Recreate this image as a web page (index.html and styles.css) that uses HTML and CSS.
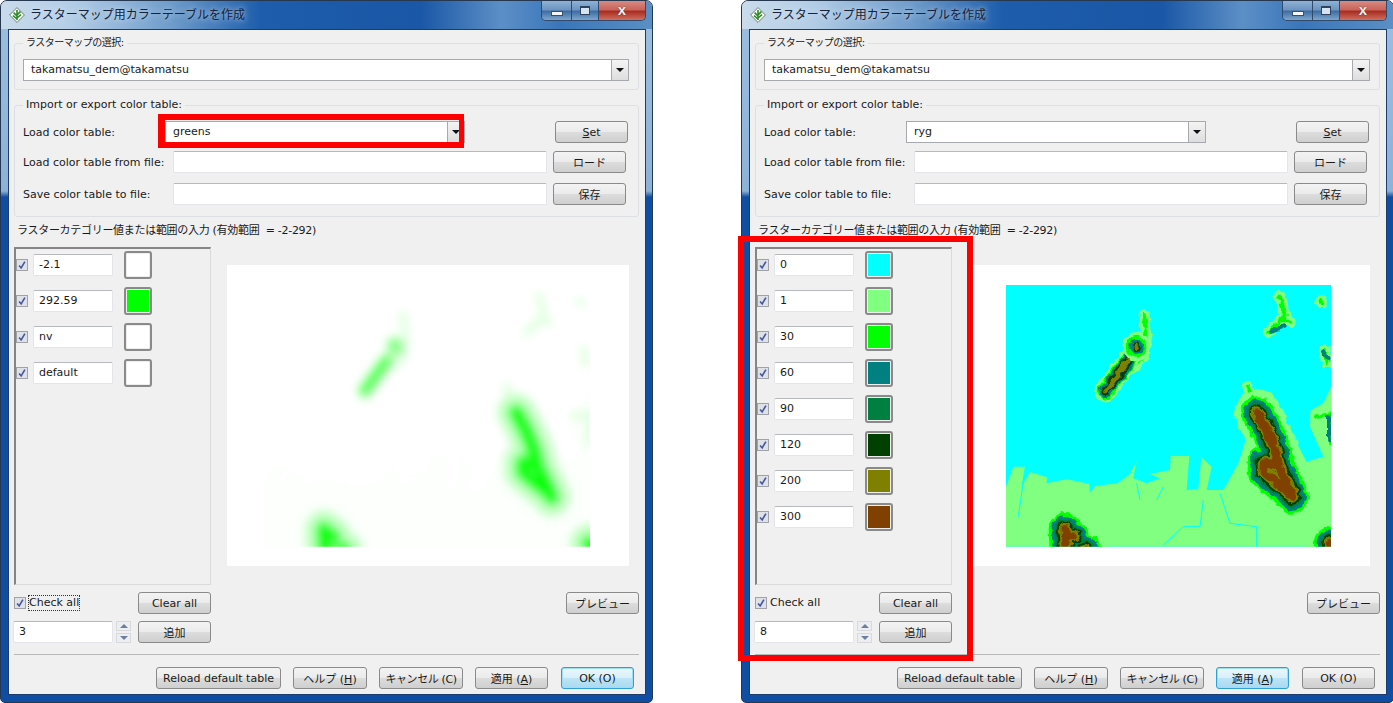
FILE: index.html
```html
<!DOCTYPE html>
<html lang="ja">

<head>
  <meta charset="UTF-8" />
  <title>ラスターマップ用カラーテーブルを作成</title>
  <link rel="stylesheet" href="styles.css">
</head>

<body>
  <!-- shared svg parts -->
  <svg class="defs" aria-hidden="true">
    <defs>
      <symbol id="tick" viewBox="0 0 12 12">
        <path d="M2.5 6.5 L5 9.5 L9.5 2" fill="none" stroke="#46599c" stroke-width="2" />
      </symbol>
      <symbol id="app" viewBox="0 0 16 16">
        <path d="M8 .6 L15.4 8 L8 15.4 L.6 8 Z" fill="#f6f9f2" stroke="#4d6a5a" stroke-width=".8" />
        <path d="M8 3 L8 13 M8 9 L4.6 5.6 M8 8 L11.4 4.6 M8 12 L4 8.6 M8 11 L12 7.6" stroke="#2f8a2c" stroke-width="1.6" fill="none" />
      </symbol>
      <filter id="rough" filterUnits="userSpaceOnUse" x="-66" y="-15" width="1206" height="903">
        <feTurbulence type="fractalNoise" baseFrequency="0.045" numOctaves="2" seed="4" />
        <feDisplacementMap in="SourceGraphic" scale="20" xChannelSelector="R" yChannelSelector="G" />
      </filter>
      <filter id="soft" filterUnits="userSpaceOnUse" x="-66" y="-15" width="1206" height="903">
        <feGaussianBlur stdDeviation="13" />
      </filter>
      <clipPath id="map-edge">
        <rect x="48" y="45" width="975" height="785" />
      </clipPath>
      <path id="land" d="M48 830 L48 650 L70 590 L105 590 L95 650 L120 606 L172 622 L170 640 L205 632 L232 628 L298 642 L300 668 L315 648 L382 640 L420 612 L440 572 L430 625 L470 640 L510 625 L480 612 L540 600 L542 558 L598 558 L590 660 L625 656 L634 562 L665 590 L650 660 L700 660 L745 580 L770 500 L900 480 L950 575 L1000 560 L960 470 L962 420 L1000 400 L1023 350 L1023 830 Z" />
      <path id="rivers" d="M105 600 L85 740 M690 670 L720 760 L800 770 L800 830 M640 690 L630 770 L580 770 L520 825 M440 640 L450 690 M520 650 L500 690" />
      <g id="big">
        <path d="M802 428 L830 480 L855 540 L866 590 L895 650 L908 682 M862 585 L822 578 L822 605 L850 630 L895 665" />
        <path d="M225 778 L228 840 M225 795 L250 798 M285 840 L285 845" />
        <path d="M1035 835 L1020 820" />
      </g>
      <g id="small">
        <path d="M348 362 L380 318 L414 272" />
      </g>
      <g id="peak">
        <path d="M438 226 L441 234" />
      </g>
      <g id="islands">
        <path d="M462 135 L470 200 L462 260 L425 295 M870 78 L885 140 L835 185 M880 150 L900 155 M992 95 L996 97 M1005 240 L1010 280 M975 440 L1020 430 L1020 520 M775 350 L778 385" />
      </g>
      <g id="spots">
        <path d="M845 182 L880 170 M1000 245 L1015 265 M1018 440 L1018 510" />
      </g>
    </defs>
  </svg>

  <!-- left window -->
  <div class="window win-left">
    <div class="titlebar">
      <svg class="app-icon"><use href="#app" /></svg>
      <span class="title">ラスターマップ用カラーテーブルを作成</span>
      <div class="caption">
        <span class="cap cap-min"><i></i></span>
        <span class="cap cap-max"><i></i></span>
        <span class="cap cap-close">x</span>
      </div>
    </div>
    <div class="client">
      <fieldset class="group group-map">
        <legend class="legend-jp">ラスターマップの選択:</legend>
        <div class="combo combo-wide"><span>takamatsu_dem@takamatsu</span><b></b></div>
      </fieldset>
      <fieldset class="group group-table">
        <legend>Import or export color table:</legend>
        <div class="form-row">
          <label class="lab lab-short">Load color table:</label>
          <div class="combo combo-table"><span>greens</span><b></b></div>
          <button class="btn btn-set"><u>S</u>et</button>
        </div>
        <div class="form-row">
          <label class="lab">Load color table from file:</label>
          <div class="input input-file"></div>
          <button class="btn">ロード</button>
        </div>
        <div class="form-row">
          <label class="lab">Save color table to file:</label>
          <div class="input input-file"></div>
          <button class="btn">保存</button>
        </div>
      </fieldset>
      <div class="range">ラスターカテゴリー値または範囲の入力 (有効範囲&nbsp; = -2-292)</div>
      <div class="main">
        <div class="side">
          <div class="rules">
            <div class="rule"><span class="check"><svg><use href="#tick" /></svg></span><div class="input input-val">-2.1</div><span class="swatch"><i class="c-white"></i></span></div>
            <div class="rule"><span class="check"><svg><use href="#tick" /></svg></span><div class="input input-val">292.59</div><span class="swatch"><i class="c-lime"></i></span></div>
            <div class="rule"><span class="check"><svg><use href="#tick" /></svg></span><div class="input input-val">nv</div><span class="swatch"><i class="c-white"></i></span></div>
            <div class="rule"><span class="check"><svg><use href="#tick" /></svg></span><div class="input input-val">default</div><span class="swatch"><i class="c-white"></i></span></div>
          </div>
          <div class="side-row">
            <span class="check"><svg><use href="#tick" /></svg></span>
            <span class="check-label focused">Check all</span>
            <button class="btn btn-side">Clear all</button>
          </div>
          <div class="side-row side-row-spin">
            <div class="input input-spin">3</div>
            <div class="spin"><b class="up"></b><b class="down"></b></div>
            <button class="btn btn-side">追加</button>
          </div>
        </div>
        <div class="preview-col">
          <div class="preview">
            <svg class="map" viewBox="-66 -15 1206 903">
              <g clip-path="url(#map-edge)">
                <use href="#land" fill="#fcfffc" />
                <g filter="url(#soft)" fill="none" stroke-linecap="round" stroke-linejoin="round">
                  <use href="#islands" stroke="#e4ffe4" stroke-width="26" />
                  <use href="#big" stroke="#c8ffc8" stroke-width="116" />
                  <use href="#big" stroke="#50ff50" stroke-width="56" />
                  <use href="#big" stroke="#00ff00" stroke-width="28" />
                  <use href="#small" stroke="#b0ffb0" stroke-width="50" />
                  <use href="#small" stroke="#30ff30" stroke-width="22" />
                  <use href="#peak" stroke="#b0ffb0" stroke-width="56" />
                  <use href="#peak" stroke="#30ff30" stroke-width="18" />
                </g>
              </g>
            </svg>
          </div>
          <button class="btn btn-preview">プレビュー</button>
        </div>
      </div>
      <div class="sep"></div>
      <div class="footer">
        <button class="btn btn-reload">Reload default table</button>
        <button class="btn btn-help">ヘルプ (<u>H</u>)</button>
        <button class="btn btn-cancel">キャンセル (C)</button>
        <button class="btn btn-apply">適用 (<u>A</u>)</button>
        <button class="btn btn-ok btn-default">OK (O)</button>
      </div>
    </div>
  </div>

  <!-- right window -->
  <div class="window win-right">
    <div class="titlebar">
      <svg class="app-icon"><use href="#app" /></svg>
      <span class="title">ラスターマップ用カラーテーブルを作成</span>
      <div class="caption">
        <span class="cap cap-min"><i></i></span>
        <span class="cap cap-max"><i></i></span>
        <span class="cap cap-close">x</span>
      </div>
    </div>
    <div class="client">
      <fieldset class="group group-map">
        <legend class="legend-jp">ラスターマップの選択:</legend>
        <div class="combo combo-wide"><span>takamatsu_dem@takamatsu</span><b></b></div>
      </fieldset>
      <fieldset class="group group-table">
        <legend>Import or export color table:</legend>
        <div class="form-row">
          <label class="lab lab-short">Load color table:</label>
          <div class="combo combo-table"><span>ryg</span><b></b></div>
          <button class="btn btn-set"><u>S</u>et</button>
        </div>
        <div class="form-row">
          <label class="lab">Load color table from file:</label>
          <div class="input input-file"></div>
          <button class="btn">ロード</button>
        </div>
        <div class="form-row">
          <label class="lab">Save color table to file:</label>
          <div class="input input-file"></div>
          <button class="btn">保存</button>
        </div>
      </fieldset>
      <div class="range">ラスターカテゴリー値または範囲の入力 (有効範囲&nbsp; = -2-292)</div>
      <div class="main">
        <div class="side">
          <div class="rules">
            <div class="rule"><span class="check"><svg><use href="#tick" /></svg></span><div class="input input-val">0</div><span class="swatch"><i class="c-cyan"></i></span></div>
            <div class="rule"><span class="check"><svg><use href="#tick" /></svg></span><div class="input input-val">1</div><span class="swatch"><i class="c-light"></i></span></div>
            <div class="rule"><span class="check"><svg><use href="#tick" /></svg></span><div class="input input-val">30</div><span class="swatch"><i class="c-lime"></i></span></div>
            <div class="rule"><span class="check"><svg><use href="#tick" /></svg></span><div class="input input-val">60</div><span class="swatch"><i class="c-teal"></i></span></div>
            <div class="rule"><span class="check"><svg><use href="#tick" /></svg></span><div class="input input-val">90</div><span class="swatch"><i class="c-green"></i></span></div>
            <div class="rule"><span class="check"><svg><use href="#tick" /></svg></span><div class="input input-val">120</div><span class="swatch"><i class="c-dark"></i></span></div>
            <div class="rule"><span class="check"><svg><use href="#tick" /></svg></span><div class="input input-val">200</div><span class="swatch"><i class="c-olive"></i></span></div>
            <div class="rule"><span class="check"><svg><use href="#tick" /></svg></span><div class="input input-val">300</div><span class="swatch"><i class="c-brown"></i></span></div>
          </div>
          <div class="side-row">
            <span class="check"><svg><use href="#tick" /></svg></span>
            <span class="check-label">Check all</span>
            <button class="btn btn-side">Clear all</button>
          </div>
          <div class="side-row side-row-spin">
            <div class="input input-spin">8</div>
            <div class="spin"><b class="up"></b><b class="down"></b></div>
            <button class="btn btn-side">追加</button>
          </div>
        </div>
        <div class="preview-col">
          <div class="preview">
            <svg class="map" viewBox="-66 -15 1206 903">
              <rect x="48" y="45" width="975" height="785" fill="#00ffff" />
              <g clip-path="url(#map-edge)">
                <use href="#land" fill="#80ff80" />
                <use href="#rivers" fill="none" stroke="#00ffff" stroke-width="3" />
                <g filter="url(#rough)" fill="none" stroke-linecap="round" stroke-linejoin="round">
                  <use href="#islands" stroke="#80ff80" stroke-width="34" />
                  <use href="#islands" stroke="#00ff00" stroke-width="12" />
                  <use href="#spots" stroke="#008080" stroke-width="14" />
                  <use href="#big" stroke="#80ff80" stroke-width="140" />
                  <use href="#big" stroke="#00ff00" stroke-width="98" />
                  <use href="#big" stroke="#008080" stroke-width="80" />
                  <use href="#big" stroke="#008040" stroke-width="62" />
                  <use href="#big" stroke="#004000" stroke-width="50" />
                  <use href="#big" stroke="#808000" stroke-width="38" />
                  <use href="#big" stroke="#804000" stroke-width="26" />
                  <use href="#small" stroke="#80ff80" stroke-width="66" />
                  <use href="#small" stroke="#00ff00" stroke-width="50" />
                  <use href="#small" stroke="#008080" stroke-width="40" />
                  <use href="#small" stroke="#004000" stroke-width="28" />
                  <use href="#small" stroke="#808000" stroke-width="15" />
                  <use href="#peak" stroke="#80ff80" stroke-width="80" />
                  <use href="#peak" stroke="#00ff00" stroke-width="58" />
                  <use href="#peak" stroke="#008080" stroke-width="40" />
                  <use href="#peak" stroke="#004000" stroke-width="22" />
                  <use href="#peak" stroke="#808000" stroke-width="12" />
                </g>
              </g>
            </svg>
          </div>
          <button class="btn btn-preview">プレビュー</button>
        </div>
      </div>
      <div class="sep"></div>
      <div class="footer">
        <button class="btn btn-reload">Reload default table</button>
        <button class="btn btn-help">ヘルプ (<u>H</u>)</button>
        <button class="btn btn-cancel">キャンセル (C)</button>
        <button class="btn btn-apply btn-default">適用 (<u>A</u>)</button>
        <button class="btn btn-ok">OK (O)</button>
      </div>
    </div>
  </div>

  <!-- red annotation frames -->
  <div class="mark mark-combo"></div>
  <div class="mark mark-list"></div>
</body>

</html>
```

FILE: styles.css
```css
html,
body {
  margin: 0;
  height: 703px;
  overflow: hidden;
  background: #fff;
}

body {
  font-family: "DejaVu Sans", "Noto Sans CJK JP", sans-serif;
  font-size: 11px;
  color: #1a1a1a;
}

.defs {
  display: block;
  width: 0;
  height: 0;
}

/* windows sit freely on the desktop */
.window {
  position: absolute;
  top: 0;
  box-sizing: border-box;
  width: 653px;
  height: 703px;
  padding: 0 6px 7px 7px;
  border: 1px solid #26384f;
  border-radius: 7px 7px 5px 5px;
  background: linear-gradient(180deg, #9dbfe0 0, #8db2d8 190px, #0f4ea2 196px, #0f4ea2 100%);
}

.win-left {
  left: 0;
}

.win-right {
  left: 741px;
}

/* title bar */
.titlebar {
  display: flex;
  align-items: flex-start;
  height: 28px;
  margin: 0 -6px 0 -7px;
  padding-left: 7px;
  border-radius: 6px 6px 0 0;
  background: linear-gradient(90deg, #c9dbeb 0, #b3cde6 70px, #6f9ccb 170px, #1d5dab 260px, #1a57a6 420px, #5c8fc6 500px, #3a76ba 560px, #5b8fc4 100%);
}

.app-icon {
  flex: none;
  width: 16px;
  height: 16px;
  margin: 6px 5px 0 1px;
}

.title {
  margin-top: 5px;
  font-size: 12px;
  line-height: 18px;
  color: #14233a;
  text-shadow: 0 0 6px #e6eff8;
}

.caption {
  display: flex;
  height: 19px;
  margin: 0 6px 0 auto;
  border: 1px solid #31496b;
  border-top: 0;
  border-radius: 0 0 5px 5px;
  overflow: hidden;
}

.cap {
  display: flex;
  align-items: center;
  justify-content: center;
  box-sizing: border-box;
  height: 100%;
  width: 30px;
  border-right: 1px solid #31496b;
  background: linear-gradient(180deg, #8fb2d6 0, #6d95c0 45%, #3f6ea3 55%, #7ea6cd 100%);
}

.cap-min i {
  display: block;
  width: 10px;
  height: 3px;
  margin-top: 6px;
  background: #f4f7fb;
  border: 1px solid #3a4f6c;
}

.cap-max {
  width: 27px;
}

.cap-max i {
  display: block;
  width: 8px;
  height: 6px;
  border: 1px solid #2f4360;
  border-top-width: 2px;
  background: #d6e4f1;
}

.cap-close {
  width: 46px;
  border-right: 0;
  background: linear-gradient(180deg, #d98b82 0, #c9655b 45%, #a92e22 55%, #cf6f60 100%);
  font-family: "Liberation Sans", sans-serif;
  font-size: 15px;
  font-weight: bold;
  color: #f6f1ef;
  text-shadow: 0 0 1px #3a1410;
  padding-bottom: 3px;
}

/* client area */
.client {
  display: flex;
  flex-direction: column;
  box-sizing: border-box;
  height: 666px;
  padding: 0 6px 0 5px;
  border: 1px solid #1d3c6b;
  background: #f0f0f0;
}

.group {
  min-width: 0;
  margin: 0;
  border: 1px solid #dcdfe3;
  border-radius: 3px;
}

.group legend {
  padding: 0 3px;
  line-height: 14px;
}

.group .legend-jp {
  font-size: 10px;
  letter-spacing: -0.5px;
}

.group-map {
  box-sizing: border-box;
  height: 54px;
  margin-top: 6px;
  padding: 9px 10px 0 8px;
}

.group-table {
  box-sizing: border-box;
  height: 119px;
  margin-top: 8px;
  padding: 9px 10px 0 8px;
}

.form-row {
  display: flex;
  align-items: center;
  height: 22px;
  margin-bottom: 8px;
}

.form-row:nth-of-type(2) {
  margin-bottom: 10px;
}

.lab {
  flex: none;
  width: 150px;
}

.lab-short {
  width: 142px;
}

.input {
  box-sizing: border-box;
  height: 22px;
  padding-left: 5px;
  border: 1px solid #e2e6ea;
  border-top-color: #b5b8bc;
  border-radius: 2px;
  background: #fff;
  line-height: 20px;
}

.input-file {
  width: 374px;
  margin-right: 6px;
}

.input-val {
  width: 80px;
  margin-left: 5px;
}

.input-spin {
  width: 100px;
}

.combo {
  display: flex;
  box-sizing: border-box;
  height: 22px;
  border: 1px solid #a6a9ad;
  background: #fff;
  line-height: 20px;
}

.combo span {
  flex: 1;
  padding-left: 7px;
}

.combo b {
  position: relative;
  flex: none;
  width: 16px;
  border-left: 1px solid #a6a9ad;
  background: linear-gradient(180deg, #f4f4f4, #dedede);
}

.combo b::after {
  content: "";
  position: absolute;
  left: 4px;
  top: 8px;
  border: 4px solid transparent;
  border-top: 4px solid #111;
  border-bottom: 0;
}

.combo-wide {
  width: 606px;
}

.combo-table {
  width: 301px;
  margin-right: 90px;
}

.btn {
  box-sizing: border-box;
  flex: none;
  width: 73px;
  height: 22px;
  padding: 0;
  border: 1px solid #8a8a8a;
  border-radius: 3px;
  background: linear-gradient(180deg, #f3f3f3 0, #ebebeb 48%, #dcdcdc 52%, #cfcfcf 100%);
  font: inherit;
  color: #1a1a1a;
}

.btn-default {
  border-color: #2f9fd6;
  background: linear-gradient(180deg, #eaf6fc 0, #d9f0fa 48%, #bde4f6 52%, #a9d9ef 100%);
  box-shadow: inset 0 0 0 1px #9fdcf5;
}

.range {
  height: 24px;
  margin: 5px 0 0 3px;
  line-height: 18px;
  letter-spacing: -0.3px;
}

.main {
  display: flex;
  flex: 1;
  min-height: 0;
}

.side {
  flex: none;
  width: 198px;
  margin-left: -1px;
}

.rules {
  box-sizing: border-box;
  height: 338px;
  margin: 1px 0 0 1px;
  padding: 2px 0 0 0;
  border: 1px solid #fff;
  border-top: 2px solid #858585;
  border-left: 2px solid #858585;
  border-right-color: #dadada;
  border-bottom-color: #dadada;
}

.rule {
  display: flex;
  align-items: center;
  height: 28px;
  margin-bottom: 8px;
}

.check {
  flex: none;
  box-sizing: border-box;
  width: 12px;
  height: 12px;
  border: 1px solid #a0a2a8;
  background: #dfe1e8;
}

.check svg {
  display: block;
  width: 10px;
  height: 10px;
}

.swatch {
  flex: none;
  box-sizing: border-box;
  width: 28px;
  height: 28px;
  margin-left: 11px;
  padding: 1px;
  border: 2px solid #8a8a8a;
  border-radius: 3px;
  background: #eee;
}

.swatch i {
  display: block;
  height: 100%;
}

.c-white { background: #fff; }
.c-cyan { background: #00ffff; }
.c-light { background: #80ff80; }
.c-lime { background: #00ff00; }
.c-teal { background: #008080; }
.c-green { background: #008040; }
.c-dark { background: #004000; }
.c-olive { background: #808000; }
.c-brown { background: #804000; }

.side-row {
  display: flex;
  align-items: center;
  height: 22px;
  margin-top: 7px;
  margin-left: 1px;
}

.side-row-spin {
  margin-top: 7px;
  margin-left: 0;
}

.check-label {
  margin-left: 3px;
  line-height: 14px;
}

.focused {
  outline: 1px dotted #333;
}

.side-row .btn-side {
  margin-left: auto;
}

.spin {
  flex: none;
  display: flex;
  flex-direction: column;
  justify-content: space-between;
  width: 15px;
  height: 22px;
  margin-left: 3px;
}

.spin b {
  position: relative;
  height: 10px;
  border: 1px solid #d8d9dc;
  background: #eceef2;
  box-sizing: border-box;
}

.spin b::after {
  content: "";
  position: absolute;
  left: 3px;
  top: 2px;
  border: 4px solid transparent;
}

.spin .up::after {
  border-bottom: 4px solid #6d7f9c;
  border-top: 0;
}

.spin .down::after {
  border-top: 4px solid #6d7f9c;
  border-bottom: 0;
}

.preview-col {
  display: flex;
  flex: 1;
  flex-direction: column;
  align-items: flex-end;
  margin-left: 16px;
}

.preview {
  width: 402px;
  height: 301px;
  margin: 19px 10px 26px 0;
  background: #fff;
}

.map {
  display: block;
  width: 402px;
  height: 301px;
}

.sep {
  height: 1px;
  background: #b8b8b8;
}

.footer {
  display: flex;
  justify-content: flex-end;
  gap: 12px;
  padding: 12px 5px 5px 0;
}

.btn-reload {
  width: 125px;
}

.btn-help {
  width: 74px;
}

.btn-cancel {
  width: 84px;
  letter-spacing: -0.4px;
}

.btn-ok {
  margin-left: 1px;
}

/* red annotation frames drawn over the screenshot */
.mark {
  position: absolute;
  box-sizing: border-box;
  border: 6px solid #ff0000;
}

.mark-combo {
  left: 158px;
  top: 114px;
  width: 306px;
  height: 34px;
  border-left-width: 7px;
  border-right-width: 5px;
}

.mark-list {
  left: 738px;
  top: 236px;
  width: 235px;
  height: 425px;
}
```
